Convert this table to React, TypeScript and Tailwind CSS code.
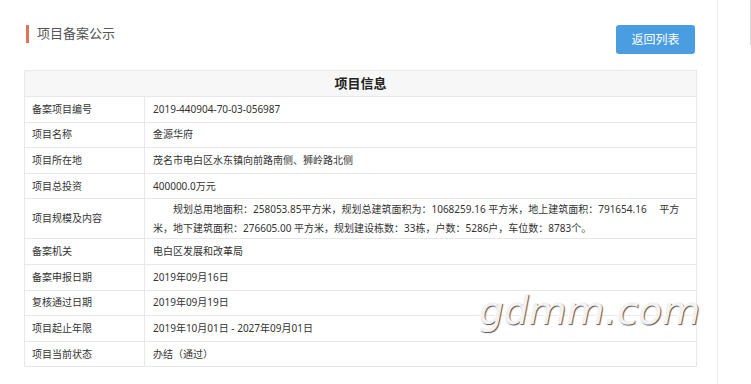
const rows: { label: string; value: string }[] = [
  { label: "备案项目编号", value: "2019-440904-70-03-056987" },
  { label: "项目名称", value: "金源华府" },
  { label: "项目所在地", value: "茂名市电白区水东镇向前路南侧、狮岭路北侧" },
  { label: "项目总投资", value: "400000.0万元" },
  { label: "项目规模及内容", value: "" },
  { label: "备案机关", value: "电白区发展和改革局" },
  { label: "备案申报日期", value: "2019年09月16日" },
  { label: "复核通过日期", value: "2019年09月19日" },
  { label: "项目起止年限", value: "2019年10月01日 - 2027年09月01日" },
  { label: "项目当前状态", value: "办结（通过）" },
];

const InfoRow = ({ label, value }: { label: string; value: string }) => {
  const isScale = label === "项目规模及内容";
  return (
    <div
      className={`grid grid-cols-[120px_1fr] border-b border-[#e8e8e8] ${
        isScale ? "h-[40px]" : "h-[25.6px]"
      }`}
    >
      <div className="flex items-center pl-[7px] border-r border-[#e8e8e8] text-[#333]">
        {label}
      </div>
      {isScale ? (
        <div className="flex flex-col justify-center pl-[8px] leading-[19px] text-[#333]">
          <span className="whitespace-nowrap indent-5">
            规划总用地面积：258053.85平方米，规划总建筑面积为：1068259.16 平方米，地上建筑面积：791654.16 　平方
          </span>
          <span className="whitespace-nowrap">
            米，地下建筑面积：276605.00 平方米，规划建设栋数：33栋，户数：5286户，车位数：8783个。
          </span>
        </div>
      ) : (
        <div className="flex items-center pl-[8px] text-[#333]">{value}</div>
      )}
    </div>
  );
};

export default function App() {
  return (
    <div className="relative w-[751px] h-[384px] overflow-hidden bg-white font-['Noto_Sans','Noto_Sans_CJK_SC',sans-serif] text-[10px]">
      <div className="w-[718px] h-full border-r border-[#ececec] pl-[24px] pr-[20px]">
        <div className="flex items-start justify-between pt-[25px] h-[54px]">
          <div className="flex items-center gap-[8px] pl-[2px] h-[18px]">
            <span className="block w-[3px] h-[18px] bg-[#e0735c]" />
            <span className="text-[13px] text-[#555]">项目备案公示</span>
          </div>
          <button className="mr-[2px] w-[79px] h-[29px] rounded-[3px] bg-[#4a9de0] text-[12px] text-white">
            返回列表
          </button>
        </div>

        <div className="mt-[16px] border border-b-0 border-[#e8e8e8]">
          <div className="flex h-[26px] items-center justify-center border-b border-[#e8e8e8] bg-[#f7f7f7] text-[13px] font-bold text-[#222]">
            项目信息
          </div>
          {rows.map((r) => (
            <InfoRow key={r.label} label={r.label} value={r.value} />
          ))}
        </div>
      </div>

      <div className="absolute right-0 top-0 h-[45px] w-[1px] bg-[#d8d8d8]" />

      <div className="absolute left-[479px] top-[291px] font-['DejaVu_Sans',sans-serif] text-[39px] font-extralight italic leading-none text-[#f2f2f2] [text-shadow:1px_1px_1px_#555,_-1px_-1px_0_#fff]">
        gdmm.com
      </div>
    </div>
  );
}
